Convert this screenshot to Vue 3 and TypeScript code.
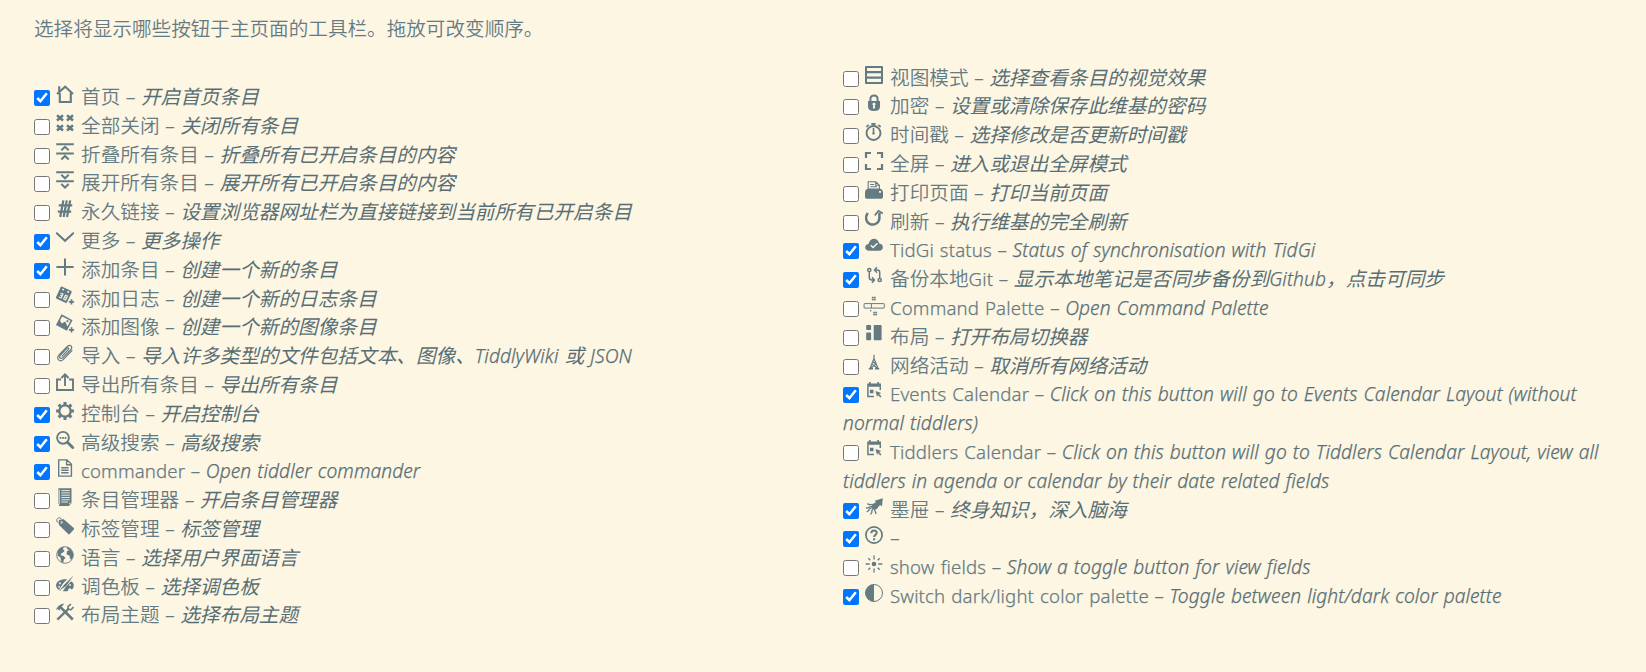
<script setup lang="ts">
interface ToolbarItem {
  icon: string
  label: string
  desc: string
  on?: boolean
}

interface Run {
  text: string
  latin: boolean
}

const icons: Record<string, string> = {
  home: '<path d="M3.8 8v9h11V8M1 9 9.2 1.6 17 9M3.2 6.6V1.2" fill="none" stroke="currentColor" stroke-width="2.1"/>',
  closeAll:
    '<path d="M1 1.300l6 5.200M7 1.300l-6 5.200M11 1.300l6 5.200M17 1.300l-6 5.200M1 11.300l6 5.200M7 11.300l-6 5.200M11 11.300l6 5.200M17 11.300l-6 5.200" fill="none" stroke="currentColor" stroke-width="2.500"/>',
  fold: '<path d="M0.2 1.2h17.6M0.2 10.4h17.6M5.3 7.3 9 3.8l3.700 3.500M5.300 16.400 9 12.900l3.700 3.500" fill="none" stroke="currentColor" stroke-width="2"/>',
  unfold:
    '<path d="M0.2 1.2h17.6M0.2 10.2h17.6M5.3 3.8 9 7.3l3.7-3.5M5.3 13 9 16.5l3.7-3.5" fill="none" stroke="currentColor" stroke-width="2"/>',
  hash: '<path d="M7.400 .4 4.200 17M10.800 .4 7.600 17M14.200 .4 11 17M2.800 5.400h13.400M1.800 11.600h13.400" fill="none" stroke="currentColor" stroke-width="2.200"/>',
  down: '<path d="M.8 4.2 9 11.8l8.2-7.6" fill="none" stroke="currentColor" stroke-width="2" stroke-linecap="round"/>',
  plus: '<path d="M9 .4v17.2M.4 9h17.2" fill="none" stroke="currentColor" stroke-width="2"/>',
  journal:
    '<g transform="rotate(25 8 8)"><path fill-rule="evenodd" d="M3 1.2h9.5q1.3 0 1.3 1.3v10.7q0 1.3-1.3 1.3H3q-1.3 0-1.3-1.3V2.5Q1.7 1.2 3 1.2zM4 2.6v1.6h1.8V2.6zM9.6 2.6v1.6h1.8V2.6zM4 7v1h2v1H4.6v1H6v1.4H4v1h3.2V7zM8.8 7v5.4h3.3V7zm1.1 1H11v1H9.900zm0 2H11v1.400H9.900z" fill="currentColor"/></g><path d="M15.500 12v6M12.500 15h6" stroke="#fdf6e3" stroke-width="3.600"/><path d="M15.500 12.300v5.200M12.900 14.900h5.200" stroke="currentColor" stroke-width="1.700"/>',
  picture:
    '<g transform="rotate(28 8 8)"><path fill-rule="evenodd" d="M1.800 1.500h12.400v12H1.800zM3.300 3v4.500l2.700 2 2.500-3.500 4.200 3.500V3z" fill="currentColor"/><circle cx="10.200" cy="4.700" r="1.100" fill="currentColor"/></g><path d="M15.500 12v6M12.500 15h6" stroke="#fdf6e3" stroke-width="3.600"/><path d="M15.500 12.300v5.200M12.900 14.900h5.200" stroke="currentColor" stroke-width="1.700"/>',
  clip: '<path d="M6.200 12.200 12.300 5.600M12.300 5.600c1-1.300-.4-2.400-1.500-1.300L4.300 11.300c-1.800 2.200.7 4.300 2.700 2.300L14.900 5.500c2.200-3-.8-5.700-3.600-3L3 10.900c-3.300 4 .8 7.900 4.400 4.500L16 6.600" fill="none" stroke="currentColor" stroke-width="1.200" stroke-linecap="round"/>',
  exporter:
    '<path d="M5 6.500H1V17h16V6.500h-4M9 13V2M5.400 5 9 1.400 12.600 5" fill="none" stroke="currentColor" stroke-width="1.900"/>',
  gear: '<circle cx="9" cy="9" r="5.700" fill="none" stroke="currentColor" stroke-width="2.300"/><path d="M9 .1v3M9 14.900v3M.1 9h3M14.900 9h3M2.700 2.700l2 2M13.300 13.300l2 2M2.700 15.300l2-2M13.300 4.700l2-2" stroke="currentColor" stroke-width="3.100"/>',
  search:
    '<circle cx="7" cy="6.800" r="5.900" fill="none" stroke="currentColor" stroke-width="1.900"/><path d="M11.400 11.300 16.700 16.500" stroke="currentColor" stroke-width="2.900" stroke-linecap="round"/><path d="M3.600 6.800h1.800M6.100 6.800h1.800M8.600 6.800h1.800" stroke="currentColor" stroke-width="1.800"/>',
  file: '<path d="M2.700 .9h8.300l4.400 4.400v11.800H2.700zM10.600 1v4.700h4.700M5.200 8.800h7.400M5.200 11.300h7.400M5.200 13.800h7.400" fill="none" stroke="currentColor" stroke-width="1.400"/>',
  notes:
    '<path fill-rule="evenodd" d="M2.300 .3h13.200v14.400h-2.200V18H3V16H2.300z" fill="currentColor"/><path d="M5.300 2.600h8.500M5.300 4.900h8.500M5.300 7.200h8.500M5.300 9.500h8.500M5.300 11.800h8.500M5.300 14h6.700M3.200 1.500v15" stroke="#fdf6e3" stroke-width=".9"/><path d="M12.500 17.800l2.900-2.900" stroke="currentColor"/>',
  tag: '<path fill-rule="evenodd" d="M2.800 3 7.700 2.300 17.800 11q.7.800 0 1.600l-4 4.500q-.8.700-1.600 0L3 8zM5.300 4.200a1.200 1.200 0 1 0 .1 0z" fill="currentColor"/><path d="M5.400 5.200C2 7 0 4.500 1 2.200 2.300 0 5 .6 6.200 3" fill="none" stroke="currentColor" stroke-width="1"/>',
  globe:
    '<circle cx="9" cy="9" r="8.300" fill="none" stroke="currentColor" stroke-width=".9"/><path d="M1.500 5.300 4 1.900 8.300.8 6.800 3 8.600 4.700 6.700 6.800 5 7.500 4.800 9.200 7.600 10l1.900 1.800-1.800 2.300-.5 2.800L5 15.200 4.500 11.600 1.800 9.800zM11 1l3.500 1.700 2.500 4.400.2 3.200-1.600 3.300-1.400-.5-.8-3.600-2.800-1 .3-3.200 2.500-1.300L11 3z" fill="currentColor"/>',
  palette:
    '<path fill-rule="evenodd" d="M0 10.500C.5 6 5.500 3.700 11.500 4.500L8.500 7 6 10.500 4.800 14 8 12.700 14.600 5.900C18.200 7.500 18.800 11.500 16.300 14.300c-1.200.6-1.400-1.300-3-1.100-1.300.5-.4 2.700-2.300 3C6 17 .3 15 0 10.500zM3 7.600v1.600h1.800V7.600zM2.400 11v1.500h1.600V11zM13.200 9.300v1.500h1.700V9.300z" fill="currentColor"/><path d="M4.800 15.600 8 10.800 16.800 1.500" fill="none" stroke="#fdf6e3" stroke-width="4"/><path d="M3.500 15.600 8.600 9.300 17.500.6 10.300 11z" fill="currentColor"/>',
  tools:
    '<path d="M4.700 4.300 16.800 16.500" stroke="currentColor" stroke-width="2.600"/><path d="M0 6.900C1.500 3.500 4 .8 8.300.8L6 3.300 3.300 7.700 1.800 6z" fill="currentColor"/><path d="M1.300 16.600 13 5.400" stroke="currentColor" stroke-width="2.200"/><path d="M15 1.200 12 3.400l.3 2.800 2.800.5 2.400-2.700" fill="none" stroke="currentColor" stroke-width="1.500"/>',
  view: '<path fill-rule="evenodd" d="M1 0h16q1 0 1 1v16q0 1-1 1H1q-1 0-1-1V1Q0 0 1 0zM2 2v3h14V2zM2 7.300v3.300h14V7.300zM2 12.700V16h14v-3.300z" fill="currentColor"/>',
  lock: '<path d="M5.400 8V5C5.400 .2 12.600 .2 12.600 5v3" fill="none" stroke="currentColor" stroke-width="2"/><path fill-rule="evenodd" d="M3 7h12v5.500Q15 17 9 17T3 12.500zM9 8.700a1.500 1.500 0 0 0-.8 2.800L7.800 14.500h2.400l-.4-3A1.500 1.500 0 0 0 9 8.700z" fill="currentColor"/>',
  clock:
    '<circle cx="8.500" cy="10" r="7" fill="none" stroke="currentColor" stroke-width="1.900"/><path d="M8.500 5v5.500M6.300 .9h4.400M8.500 1v2M1.300 3.900l2.300-2M15.700 3.900l-2.300-2" stroke="currentColor" stroke-width="1.600"/><circle cx="8.500" cy="10.400" r="1.200" fill="currentColor"/>',
  full: '<path d="M1 6V1h5M12 1h5v5M17 12v5h-5M6 17H1v-5" fill="none" stroke="currentColor" stroke-width="2.200"/>',
  print:
    '<path d="M3.200 8V.8h7.600l3.600 3.500V8M10.700 1v3.300h3.400M5.200 3.500h4M5.200 5.700h7" fill="none" stroke="currentColor" stroke-width="1.100"/><path fill-rule="evenodd" d="M3 7.600h12q3 1 3 4V16q0 1.800-1.800 1.800H1.800Q0 17.800 0 16v-4.400Q0 8.600 3 7.600zM14 10.100v1.600h2v-1.600z" fill="currentColor"/>',
  refresh:
    '<path d="M2.700 3C-.2 7.500 1 12 4.600 13.800c4.500 2.200 10-1 9.800-6.200V3" fill="none" stroke="currentColor" stroke-width="2.500"/><path d="M9.800 5.300 13.500 1l4.300 2.600" fill="none" stroke="currentColor" stroke-width="1.800"/>',
  cloud:
    '<path d="M4.500 12.800C-1.200 12.600-.9 6.500 3.500 5.900 4.900-.8 13-1 14.200 5.500c5 .3 5 7.300-.2 7.300z" fill="currentColor"/><path d="M5.800 7.200l2.300 2.300 4.300-4.300" fill="none" stroke="#fdf6e3" stroke-width="1.500"/>',
  git: '<g fill="none" stroke="currentColor" stroke-width="1.500"><circle cx="4.300" cy="3" r="1.600"/><circle cx="14.700" cy="13" r="1.600"/><path d="M4.300 5v5.600q0 2.400 2.400 2.400h2M14.700 11V5.400Q14.700 3 12.300 3h-2M7 10.300 9.400 13 7 15.700M12 .3 9.500 3 12 5.700"/></g>',
  command:
    '<path d="M-.4 7.600h19.200q.5 0 .5.500v3.500q0 .5-.5.500H-.4q-.5 0-.5-.5V8.100q0-.5.500-.5zM6.400 7.600v4.500" fill="none" stroke="currentColor" stroke-width="1"/><path d="M6.700 1.600h4.200M6.700 3.600h4.200M7.800 .5v4.200M9.800 .5v4.200M8 16.600h4.200M8 18.600h4.200M9.100 15.500v4.200M11.100 15.500v4.200" stroke="currentColor" stroke-width=".8"/><circle cx="5.700" cy="14.700" r=".8" fill="currentColor"/>',
  layout:
    '<path d="M2 0h3.300q.8 0 .8.800v3.400q0 .8-.8.800H2q-.8 0-.8-.8V.8Q1.200 0 2 0zM2 7.500h3.300q.8 0 .8.800v6.200q0 .8-.8.800H2q-.8 0-.8-.8V8.300q0-.8.800-.8zM9.500 0h6.300q.8 0 .8.800v13.700q0 .8-.8.800H9.500q-.8 0-.8-.8V.8q0-.8.800-.8z" fill="currentColor"/>',
  network:
    '<path d="M9 .8v5M9 4.500 5 14.500M9 4.500 13 14.500M6.600 9.600l5.600 4.600M11.400 9.600 5.800 14.200M7.600 7.300l2.800 2.500" fill="none" stroke="currentColor" stroke-width="1.200"/><path d="M3.800 14.700H8M10 14.700h4.200" stroke="currentColor" stroke-width="1.600"/>',
  calendar:
    '<path d="M2.900 4.500v9.900h6M15.300 4.500V8" fill="none" stroke="currentColor" stroke-width="1.500"/><path d="M2.200 1.500H4V0h1.700v1.500h6.600V0H14v1.500h2v3.200H2.200zM4.900 7.700h3.600v3.600H4.900zM10.500 8.900l5.800 2.100-2.200.9 2.400 2.600-1.100 1.100-2.500-2.500-.8 2z" fill="currentColor"/>',
  squid:
    '<path d="M17.800.2 17 8.200 15 7 11.500 11.300 8.200 11.400 6.800 8.600 7.500 6 11 4.300 9.700 2.700z" fill="currentColor"/><path d="M8.600 8.600Q5 8 3.300 9.800L1 10M8.500 9.300Q4 10 4 12.300L1.800 14M9.200 10Q6 12 7 14L5.500 16.500M10 10q-.7 3 .3 3.700l.8 2.300M8.500 8Q6.500 5.500 4.500 6.800L2.200 5.700" fill="none" stroke="currentColor" stroke-width="1.300"/>',
  help: '<circle cx="9" cy="9" r="8.100" fill="none" stroke="currentColor" stroke-width="1.700"/><path d="M6.300 7.200C6.300 3.400 11.900 3.600 11.700 7c-.2 1.900-2.600 1.900-2.600 4" fill="none" stroke="currentColor" stroke-width="2"/><path d="M8 12.300h2.200v2H8z" fill="currentColor"/>',
  sun: '<circle cx="9" cy="9" r="2.300" fill="currentColor"/><path d="M9 .5v4M9 13.500v4M.7 9h4M13.300 9h4M3.300 3.300l2 2M12.700 12.700l2 2M3.300 14.700l2-2M12.700 5.300l2-2" stroke="currentColor" stroke-width="1.300"/>',
  contrast:
    '<circle cx="9" cy="9" r="8.500" fill="none" stroke="currentColor" stroke-width="1"/><path d="M9 .5a8.500 8.500 0 0 0 0 17z" fill="currentColor"/>',
}

const left: ToolbarItem[] = [
  { icon: 'home', label: '首页', desc: '开启首页条目', on: true },
  { icon: 'closeAll', label: '全部关闭', desc: '关闭所有条目' },
  { icon: 'fold', label: '折叠所有条目', desc: '折叠所有已开启条目的内容' },
  { icon: 'unfold', label: '展开所有条目', desc: '展开所有已开启条目的内容' },
  { icon: 'hash', label: '永久链接', desc: '设置浏览器网址栏为直接链接到当前所有已开启条目' },
  { icon: 'down', label: '更多', desc: '更多操作', on: true },
  { icon: 'plus', label: '添加条目', desc: '创建一个新的条目', on: true },
  { icon: 'journal', label: '添加日志', desc: '创建一个新的日志条目' },
  { icon: 'picture', label: '添加图像', desc: '创建一个新的图像条目' },
  { icon: 'clip', label: '导入', desc: '导入许多类型的文件包括文本、图像、TiddlyWiki 或 JSON' },
  { icon: 'exporter', label: '导出所有条目', desc: '导出所有条目' },
  { icon: 'gear', label: '控制台', desc: '开启控制台', on: true },
  { icon: 'search', label: '高级搜索', desc: '高级搜索', on: true },
  { icon: 'file', label: 'commander', desc: 'Open tiddler commander', on: true },
  { icon: 'notes', label: '条目管理器', desc: '开启条目管理器' },
  { icon: 'tag', label: '标签管理', desc: '标签管理' },
  { icon: 'globe', label: '语言', desc: '选择用户界面语言' },
  { icon: 'palette', label: '调色板', desc: '选择调色板' },
  { icon: 'tools', label: '布局主题', desc: '选择布局主题' },
]

const right: ToolbarItem[] = [
  { icon: 'view', label: '视图模式', desc: '选择查看条目的视觉效果' },
  { icon: 'lock', label: '加密', desc: '设置或清除保存此维基的密码' },
  { icon: 'clock', label: '时间戳', desc: '选择修改是否更新时间戳' },
  { icon: 'full', label: '全屏', desc: '进入或退出全屏模式' },
  { icon: 'print', label: '打印页面', desc: '打印当前页面' },
  { icon: 'refresh', label: '刷新', desc: '执行维基的完全刷新' },
  { icon: 'cloud', label: 'TidGi status', desc: 'Status of synchronisation with TidGi', on: true },
  { icon: 'git', label: '备份本地Git', desc: '显示本地笔记是否同步备份到Github，点击可同步', on: true },
  { icon: 'command', label: 'Command Palette', desc: 'Open Command Palette' },
  { icon: 'layout', label: '布局', desc: '打开布局切换器' },
  { icon: 'network', label: '网络活动', desc: '取消所有网络活动' },
  {
    icon: 'calendar',
    label: 'Events Calendar',
    desc: 'Click on this button will go to Events Calendar Layout (without normal tiddlers)',
    on: true,
  },
  {
    icon: 'calendar',
    label: 'Tiddlers Calendar',
    desc: 'Click on this button will go to Tiddlers Calendar Layout, view all tiddlers in agenda or calendar by their date related fields',
  },
  { icon: 'squid', label: '墨屉', desc: '终身知识，深入脑海', on: true },
  { icon: 'help', label: '', desc: '', on: true },
  { icon: 'sun', label: 'show fields', desc: 'Show a toggle button for view fields' },
  {
    icon: 'contrast',
    label: 'Switch dark/light color palette',
    desc: 'Toggle between light/dark color palette',
    on: true,
  },
]

const columns = [left, right]

// Latin and CJK runs are sized separately so their heights agree.
function runs(text: string): Run[] {
  return (text.match(/[\x20-\x7e]+|[^\x20-\x7e]+/g) ?? []).map((t) => ({
    text: t,
    latin: /^[\x20-\x7e]/.test(t),
  }))
}
</script>

<template>
  <main class="page">
    <p class="intro">选择将显示哪些按钮于主页面的工具栏。拖放可改变顺序。</p>
    <div class="columns">
      <div v-for="(items, c) in columns" :key="c" class="column">
        <div v-for="(item, i) in items" :key="i" class="row">
          <input type="checkbox" class="check" :checked="item.on" /><svg
            class="icon"
            viewBox="0 0 18 18"
            v-html="icons[item.icon]"
          /><span v-for="(r, k) in runs(item.label)" :key="k" :class="{ latin: r.latin }">{{ r.text }}</span
          ><span class="dash">{{ item.label ? ' – ' : '– ' }}</span
          ><em
            ><span v-for="(r, k) in runs(item.desc)" :key="k" :class="{ latin: r.latin }">{{ r.text }}</span></em
          >
        </div>
      </div>
    </div>
  </main>
</template>

<style>
html,
body {
  background: #fdf6e3;
}
</style>

<style scoped>
.page {
  box-sizing: border-box;
  height: 672px;
  padding: 14px 34px 0;
  overflow: hidden;
  color: #657b83;
  font-family: 'Noto Sans', 'Noto Sans CJK SC', sans-serif;
  font-weight: 350;
}

.intro {
  margin: 0;
  font-size: 19.6px;
  line-height: 30px;
}

.columns {
  display: grid;
  grid-template-columns: 769px 769px;
  column-gap: 40px;
  align-items: start;
  padding-top: 19px;
  font-size: 19.65px;
  line-height: 28.8px;
}

.column {
  padding-top: 0.6px;
}

.column:first-child {
  padding-top: 20px;
}

.row {
  min-height: 28.8px;
}

.check {
  width: 16px;
  height: 16px;
  margin: 0 6px 0 0;
  vertical-align: -2px;
}

.icon {
  width: 18px;
  height: 18px;
  margin-right: 7px;
  vertical-align: 1px;
  overflow: visible;
}

.dash {
  word-spacing: 0.3px;
}

em {
  color: #586e75;
  font-weight: 400;
}

.latin {
  font-size: 18.6px;
  font-weight: 300;
  letter-spacing: 0.15px;
  word-spacing: 1px;
  -webkit-text-stroke: 0.25px currentColor;
}

em .latin {
  font-size: 19.2px;
  letter-spacing: 0.07px;
  word-spacing: 0.9px;
}
</style>
